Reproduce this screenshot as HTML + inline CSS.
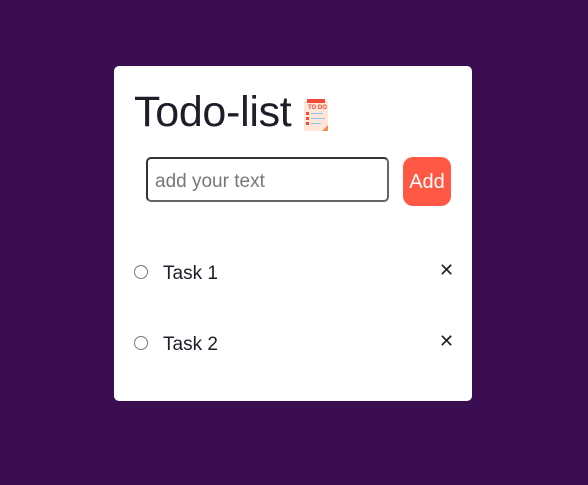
<!DOCTYPE html>
<html><head><style>
body{margin:0;width:588px;height:485px;background:#3b0d51;font-family:"Liberation Sans",sans-serif;position:relative;overflow:hidden}
.card{position:absolute;left:114px;top:66px;width:358px;height:335px;background:#fff;border-radius:5px}
.t{position:absolute;left:20px;top:21px;font-size:43px;color:#1e1e2a;line-height:50px;letter-spacing:-0.3px}
.inp{position:absolute;left:32px;top:91px;width:239px;height:41px;border:2px solid #333;border-bottom-color:#666;border-right-color:#666;border-radius:5px;box-sizing:content-box}
.inp span{position:absolute;left:7px;top:12px;font-size:19px;color:#777}
.btn{position:absolute;left:289px;top:91px;width:48px;height:49px;background:#ff5945;border-radius:10px;color:#fff;font-size:20px;text-align:center;line-height:51px}
.row{position:absolute;left:20px;width:320px;height:24px}
.c{position:absolute;left:0;top:5px;width:12px;height:12px;border:1.5px solid #777;border-radius:50%}
.tx{position:absolute;left:29px;top:2px;font-size:19px;color:#1e1e2a;line-height:24px}
.x{position:absolute;left:305px;top:0px;font-size:18px;color:#222}
</style></head><body>
<div class="card">
<div class="t">Todo-list</div>
<svg style="position:absolute;left:189px;top:33px" width="26" height="32" viewBox="0 0 26 32">
<rect x="1" y="2" width="24" height="30" fill="#ffe6d6"/>
<rect x="4" y="0" width="18" height="4" fill="#ef4b3a"/>
<text x="5" y="10" font-size="6" font-weight="bold" fill="#ef4b3a" font-family="Liberation Sans">TO DO</text>
<rect x="3" y="13" width="3" height="3" fill="#ef4b3a"/><rect x="8" y="14" width="12" height="1" fill="#8cc4f0"/>
<rect x="3" y="18" width="3" height="3" fill="#ef4b3a"/><rect x="8" y="19" width="14" height="1" fill="#8cc4f0"/>
<rect x="3" y="23" width="3" height="3" fill="#ef4b3a"/><rect x="8" y="24" width="10" height="1" fill="#8cc4f0"/>
<polygon points="19,32 25,26 25,32" fill="#f08a5a"/>
</svg>
<div class="inp"><span>add your text</span></div>
<div class="btn">Add</div>
<div class="row" style="top:194px"><div class="c"></div><div class="tx">Task 1</div><div class="x">✕</div></div>
<div class="row" style="top:265px"><div class="c"></div><div class="tx">Task 2</div><div class="x">✕</div></div>
</div>
</body></html>
